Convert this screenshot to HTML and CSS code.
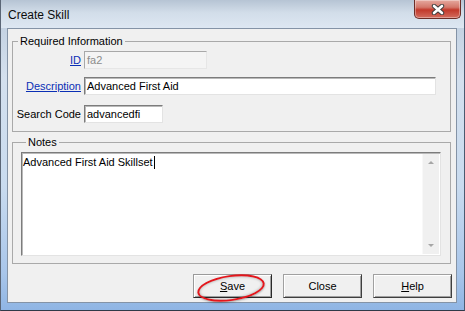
FILE: index.html
```html
<!DOCTYPE html>
<html lang="en">
  <head>
    <meta charset="utf-8">
    <title>Create Skill</title>
    <link rel="stylesheet" href="styles.css">
  </head>
  <body>
    <div class="window">
      <div class="titlebar">
        <span class="title">Create Skill</span>
        <span class="close-btn">
          <svg width="14" height="11" viewBox="0 0 14 11">
            <path d="M3 2 L11 9 M11 2 L3 9" stroke="#3b3b3b" stroke-width="4.4" stroke-linecap="round"/>
            <path d="M3 2 L11 9 M11 2 L3 9" stroke="#fff" stroke-width="2.6" stroke-linecap="round"/>
          </svg>
        </span>
      </div>

      <div class="client">
        <fieldset class="group group-required">
          <legend>Required Information</legend>
          <div class="row row-id">
            <label class="lbl"><a href="#">ID</a></label>
            <div class="field field-id disabled">fa2</div>
          </div>
          <div class="row row-desc">
            <label class="lbl"><a href="#">Description</a></label>
            <div class="field field-desc">Advanced First Aid</div>
          </div>
          <div class="row row-code">
            <label class="lbl">Search Code</label>
            <div class="field field-code">advancedfi</div>
          </div>
        </fieldset>

        <fieldset class="group group-notes">
          <legend>Notes</legend>
          <div class="memo">
            <div class="memo-text">Advanced First Aid Skillset<span class="caret"></span></div>
            <div class="memo-scroll">
              <span class="arrow arrow-up"></span>
              <span class="arrow arrow-down"></span>
            </div>
          </div>
        </fieldset>

        <div class="buttons">
          <button class="btn btn-save"><u>S</u>ave<span class="ring"></span></button>
          <button class="btn">Close</button>
          <button class="btn"><u>H</u>elp</button>
        </div>
      </div>
    </div>
  </body>
</html>
```

FILE: styles.css
```css
* {
  box-sizing: border-box;
}

body {
  margin: 0;
  font-family: "Liberation Sans", Arial, sans-serif;
  font-size: 11px;
  color: #000;
  background: #fff;
}

.window {
  width: 465px;
  height: 311px;
  display: flex;
  flex-direction: column;
  padding-bottom: 7px;
  border-left: 1px solid #5b6676;
  border-right: 1px solid #4a5a70;
  border-bottom: 1px solid #2f3a48;
  background: linear-gradient(to bottom, #bccbdc 0%, #d4e0ee 25%, #c9dbef 60%, #a9c6ea 88%, #8fb5e4 100%);
}

/* title bar */

.titlebar {
  height: 28px;
  display: flex;
  align-items: flex-start;
  background: linear-gradient(to bottom, #b6c4d4 0%, #d2dde9 45%, #dde7f2 100%);
}

.title {
  font-size: 12px;
  margin: 8px 0 0 7px;
  color: #0c0c0c;
}

.close-btn {
  margin-left: auto;
  margin-right: 3px;
  width: 47px;
  height: 19px;
  display: flex;
  align-items: center;
  justify-content: center;
  border: 1px solid #6c2d27;
  border-top: 0;
  border-radius: 0 0 5px 5px;
  background: linear-gradient(to bottom, #e6a99f 0%, #d4786b 40%, #c2392b 55%, #d36d5f 100%);
  box-shadow: inset 0 0 0 1px rgba(255, 255, 255, 0.35);
}

/* dialog body */

.client {
  flex: 1;
  margin: 0 7px 0 6px;
  padding-top: 5px;
  background: #f0f0f0;
  border: 1px solid #8493a6;
  display: flex;
  flex-direction: column;
}

.group {
  margin: 0 5px 0 4px;
  padding: 0;
  border: 1px solid #a9a9a9;
  min-width: 0;
}

.group legend {
  margin-left: 5px;
  padding: 0 2px;
  line-height: 14px;
  font-size: 11px;
}

.group-required {
  padding-bottom: 8px;
}

.row {
  display: flex;
  align-items: center;
}

.row-id {
  margin-top: 3px;
}

.row-desc {
  margin-top: 8px;
}

.row-code {
  margin-top: 10px;
}

.lbl {
  width: 68px;
  margin-right: 3px;
  text-align: right;
}

.lbl a {
  color: #0a2fb5;
}

.field {
  height: 18px;
  padding: 1px 2px;
  line-height: 14px;
  background: #fff;
  border: 1px solid;
  border-color: #7c7c7c #e3e3e3 #e3e3e3 #7c7c7c;
  box-shadow: inset 1px 1px 0 #b9b9b9;
}

.field-id {
  width: 123px;
}

.field-desc {
  width: 352px;
}

.field-code {
  width: 79px;
}

.disabled {
  background: #f4f4f4;
  color: #8c8c8c;
  border-color: #a8a8a8 #e6e6e6 #e6e6e6 #a8a8a8;
  box-shadow: none;
}

/* notes */

.group-notes {
  margin-top: 3px;
  padding: 0 9px 7px 8px;
}

.memo {
  margin-top: 3px;
  height: 104px;
  display: flex;
  background: #fff;
  border: 1px solid;
  border-color: #7c7c7c #e3e3e3 #e3e3e3 #7c7c7c;
  box-shadow: inset 1px 1px 0 #b9b9b9;
}

.memo-text {
  flex: 1;
  padding: 3px 1px;
  line-height: 13px;
}

.caret {
  display: inline-block;
  width: 1px;
  height: 13px;
  margin-left: 1px;
  vertical-align: -3px;
  background: #000;
}

.memo-scroll {
  width: 17px;
  margin: 1px 1px 1px 0;
  background: #f0f0f0;
  border-left: 1px solid #f8f8f8;
  display: flex;
  flex-direction: column;
  justify-content: space-between;
  align-items: center;
  padding: 7px 0 7px;
}

.arrow {
  width: 0;
  height: 0;
  border-left: 3px solid transparent;
  border-right: 3px solid transparent;
}

.arrow-up {
  border-bottom: 3px solid #a6a6a6;
}

.arrow-down {
  border-top: 3px solid #a6a6a6;
}

/* buttons */

.buttons {
  display: flex;
  justify-content: flex-end;
  gap: 11px;
  margin: 10px 4px 0 0;
}

.btn {
  position: relative;
  width: 79px;
  height: 24px;
  padding: 0;
  font-family: inherit;
  font-size: 11px;
  color: #000;
  background: #f0f0f0;
  border: 1px solid;
  border-color: #a0a0a0 #3f3f3f #3f3f3f #a0a0a0;
  box-shadow: inset 1px 1px 0 #fff, inset -1px -1px 0 #a0a0a0;
}

.btn-save {
  border-color: #9a9a9a #2a2a2a #2a2a2a #9a9a9a;
}

/* red annotation ring drawn over the Save button */
.ring {
  position: absolute;
  left: 3px;
  top: 0;
  width: 68px;
  height: 26px;
  border: 2px solid #e3161c;
  border-radius: 50%;
  transform: rotate(-8deg);
  box-shadow: inset 0 0 3px rgba(0, 0, 0, 0.35), 0 1px 2px rgba(0, 0, 0, 0.3);
  pointer-events: none;
}
```
